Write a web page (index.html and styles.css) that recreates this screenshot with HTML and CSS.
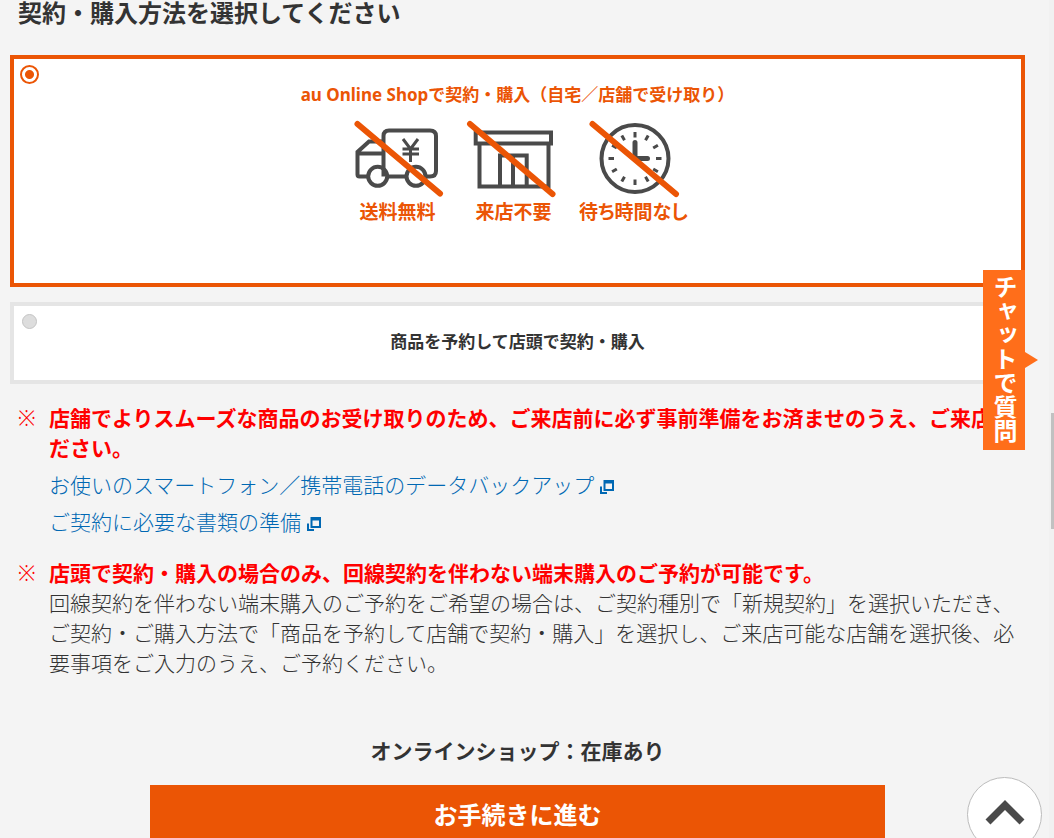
FILE: index.html
```
<!DOCTYPE html>
<html lang="ja">
<head>
  <meta charset="UTF-8" />
  <title>契約・購入方法の選択 | au Online Shop</title>
  <meta name="viewport" content="width=device-width, initial-scale=1" />
  <link rel="stylesheet" href="styles.css">
</head>
<body>
  <main class="container">
    <h2 class="heading">契約・購入方法を選択してください</h2>

    <form class="purchase-form">
      <!-- 購入方法 -->
      <label class="option option-online">
        <input type="radio" name="method" value="online" checked>
        <span class="option-title">au Online Shopで契約・購入（自宅／店舗で受け取り）</span>
        <span class="merits">
          <span class="merit">
            <svg class="merit-icon" viewBox="0 0 92 78" aria-hidden="true">
              <g class="line">
                <path d="M35 56.5H54M31.5 56.5V16Q31.5 10.5 37 10.5H78Q84 10.5 84 16V51Q84 56.5 78 56.5H74"/>
                <path d="M16 56.5H7.5Q5.5 56.5 5.5 54.5V32L17 21.5H31.5M5.5 33.5H31.5"/>
                <circle cx="25.7" cy="56.3" r="9.5"/>
                <circle cx="64" cy="56.3" r="9.5"/>
              </g>
              <path class="yen" d="M51 19L58.5 29L66 19M58.5 29V42M50.5 29H67M50.5 34H67"/>
              <path class="slash" d="M5.5 4L88 73.5"/>
            </svg>
            <span class="merit-text">送料無料</span>
          </span>
          <span class="merit">
            <svg class="merit-icon" viewBox="0 0 92 78" aria-hidden="true">
              <g class="line">
                <path d="M7.7 12.5H83V23.5H7.7ZM11.5 23.5V66.5H80.5V23.5"/>
                <path d="M32 66.5V35.5H58.7V66.5M45 35.5V66.5"/>
              </g>
              <path class="slash" d="M2 4L84.5 74"/>
            </svg>
            <span class="merit-text">来店不要</span>
          </span>
          <span class="merit">
            <svg class="merit-icon" viewBox="0 0 92 78" aria-hidden="true">
              <circle class="line" cx="47" cy="38.5" r="33.5"/>
              <path class="hands" d="M47 22.5V38.5H59.5"/>
              <path class="ticks" d="M47 12V17.5M47 59.5V65M20.5 38.5H26M68 38.5H73.5M60.2 15.6L57.5 20.3M33.8 15.6L36.5 20.3M60.2 61.4L57.5 56.7M33.8 61.4L36.5 56.7M69.9 25.2L65.2 28M24.1 25.2L28.8 28M24.1 51.8L28.8 49M69.9 51.8L65.2 49"/>
              <path class="slash" d="M4.5 4L88 74"/>
            </svg>
            <span class="merit-text">待ち時間なし</span>
          </span>
        </span>
      </label>

      <label class="option">
        <input type="radio" name="method" value="reserve">
        <span class="option-title">商品を予約して店頭で契約・購入</span>
      </label>

      <!-- 注意事項 -->
      <ul class="notes">
        <li>
          <strong>店舗でよりスムーズな商品のお受け取りのため、ご来店前に必ず事前準備をお済ませのうえ、ご来店ください。</strong>
          <p class="note-link"><a href="#backup">お使いのスマートフォン／携帯電話のデータバックアップ<svg class="blank-icon" viewBox="0 0 14 14" aria-hidden="true"><path d="M3.5 0H14V11H3.500ZM5.500 3.500V9H12V3.500Z" fill-rule="evenodd"/><path d="M0 6.500H2V12H7V14H0Z"/></svg></a></p>
          <p class="note-link"><a href="#documents">ご契約に必要な書類の準備<svg class="blank-icon" viewBox="0 0 14 14" aria-hidden="true"><path d="M3.5 0H14V11H3.500ZM5.500 3.500V9H12V3.500Z" fill-rule="evenodd"/><path d="M0 6.500H2V12H7V14H0Z"/></svg></a></p>
        </li>
        <li>
          <strong>店頭で契約・購入の場合のみ、回線契約を伴わない端末購入のご予約が可能です。</strong>
          <p>回線契約を伴わない端末購入のご予約をご希望の場合は、ご契約種別で「新規契約」を選択いただき、ご契約・ご購入方法で「商品を予約して店舗で契約・購入」を選択し、ご来店可能な店舗を選択後、必要事項をご入力のうえ、ご予約ください。</p>
        </li>
      </ul>

      <p class="stock">オンラインショップ：在庫あり</p>
      <button type="submit" class="submit-btn">お手続きに進む</button>
    </form>
  </main>

  <a href="#chat" class="chat-tab">チャットで質問</a>
  <button type="button" class="page-top" aria-label="ページの先頭へ">
    <svg viewBox="0 0 40 26" aria-hidden="true"><path d="M3 22L20 5L37 22"/></svg>
  </button>
  <div class="scroll-track"><div class="scroll-thumb"></div></div>
</body>
</html>
```
FILE: styles.css
```
html {
  scrollbar-width: none;
}
* {
  box-sizing: border-box;
}
body {
  margin: 0;
  background: #f4f4f4;
  color: #333;
  font-family: "Noto Sans", "Noto Sans CJK JP", sans-serif;
  font-size: 21px;
  font-weight: 300;
  line-height: 30px;
}
p {
  margin: 0;
}
.container {
  padding: 0 29px 40px 10px;
}
.heading {
  margin: 0 0 30px;
  padding-left: 8px;
  font-size: 24px;
  line-height: 25px;
}

/* 購入方法 */
.option {
  display: block;
  position: relative;
  margin-bottom: 15px;
  padding: 21px 10px 23px;
  border: 4px solid #e5e5e5;
  background: #fff;
  text-align: center;
  cursor: pointer;
}
.option-online {
  padding-bottom: 56px;
  border-color: #eb5505;
  color: #eb5505;
}
.option input {
  appearance: none;
  position: absolute;
  top: 8px;
  left: 8px;
  width: 15px;
  height: 15px;
  margin: 0;
  border: 1px solid #c4c4c4;
  border-radius: 50%;
  background: #ddd;
}
.option input:checked {
  top: 6px;
  left: 6px;
  width: 19px;
  height: 19px;
  border: 2px solid #eb5505;
  background: radial-gradient(circle, #eb5505 4px, #fff 5px);
}
.option-title {
  display: block;
  font-size: 17px;
  font-weight: bold;
  line-height: 30px;
}
.merits {
  display: grid;
  grid-template-columns: 116px 116px 124px;
  justify-content: center;
  margin-top: 10px;
}
.merit {
  display: flex;
  flex-direction: column;
  align-items: center;
}
.merit-icon {
  width: 92px;
  height: 78px;
  fill: none;
  stroke: #4a4a4a;
  overflow: visible;
}
.merit-text {
  font-size: 19px;
  font-weight: bold;
  line-height: 29px;
  font-feature-settings: "palt";
}
.line {
  stroke-width: 4;
}
.yen, .ticks {
  stroke-width: 3;
}
.hands {
  stroke-width: 5;
  stroke-linecap: round;
}
.slash {
  stroke: #eb5505;
  stroke-width: 6;
  stroke-linecap: round;
}

/* 注意事項 */
.notes {
  list-style: none;
  margin: 19px 0 0;
  padding: 0 0 0 39px;
}
.notes li {
  margin-bottom: 21px;
}
.notes li::before {
  content: "※";
  float: left;
  margin-left: -31px;
  color: #f00;
}
.notes strong {
  display: block;
  color: #f00;
  font-weight: bold;
}
.note-link {
  margin-top: 7px;
}
.note-link a {
  color: #0068b3;
  text-decoration: none;
}
.note-link a:hover {
  text-decoration: underline;
}
.blank-icon {
  width: 14px;
  height: 14px;
  margin-left: 6px;
  vertical-align: -1px;
  fill: #0068b3;
}

.stock {
  margin: 58px 0 19px;
  font-weight: bold;
  text-align: center;
}
.submit-btn {
  display: block;
  width: 100%;
  max-width: 735px;
  margin: 0 auto;
  padding: 15px 0;
  border: none;
  background: #eb5505;
  color: #fff;
  font-family: inherit;
  font-size: 24px;
  font-weight: bold;
  line-height: 30px;
  cursor: pointer;
}

/* 固定表示 */
.chat-tab {
  position: fixed;
  top: 270px;
  right: 29px;
  width: 42px;
  padding: 5px 0 7px;
  background: #ff6e1a;
  color: #fff;
  font-size: 24px;
  font-weight: bold;
  line-height: 42px;
  text-decoration: none;
  writing-mode: vertical-rl;
}
.chat-tab::after {
  content: "";
  position: absolute;
  top: 50%;
  left: 100%;
  margin-top: -8px;
  border: 8px solid transparent;
  border-left: 13px solid #ff6e1a;
  border-right: 0;
}
.page-top {
  position: fixed;
  right: 12px;
  bottom: -14px;
  width: 75px;
  height: 75px;
  padding: 0 0 4px;
  border: 1px solid #bbb;
  border-radius: 50%;
  background: #fff;
  cursor: pointer;
}
.page-top svg {
  display: block;
  width: 40px;
  height: 26px;
  margin: 0 auto;
  fill: none;
  stroke: #4a4a4a;
  stroke-width: 7;
}
.scroll-track {
  position: fixed;
  top: 0;
  right: 0;
  width: 5px;
  height: 100%;
  background: #f1f1f1;
}
.scroll-thumb {
  width: 3px;
  height: 116px;
  margin: 413px 0 0 auto;
  background: #c1c1c1;
}
```
